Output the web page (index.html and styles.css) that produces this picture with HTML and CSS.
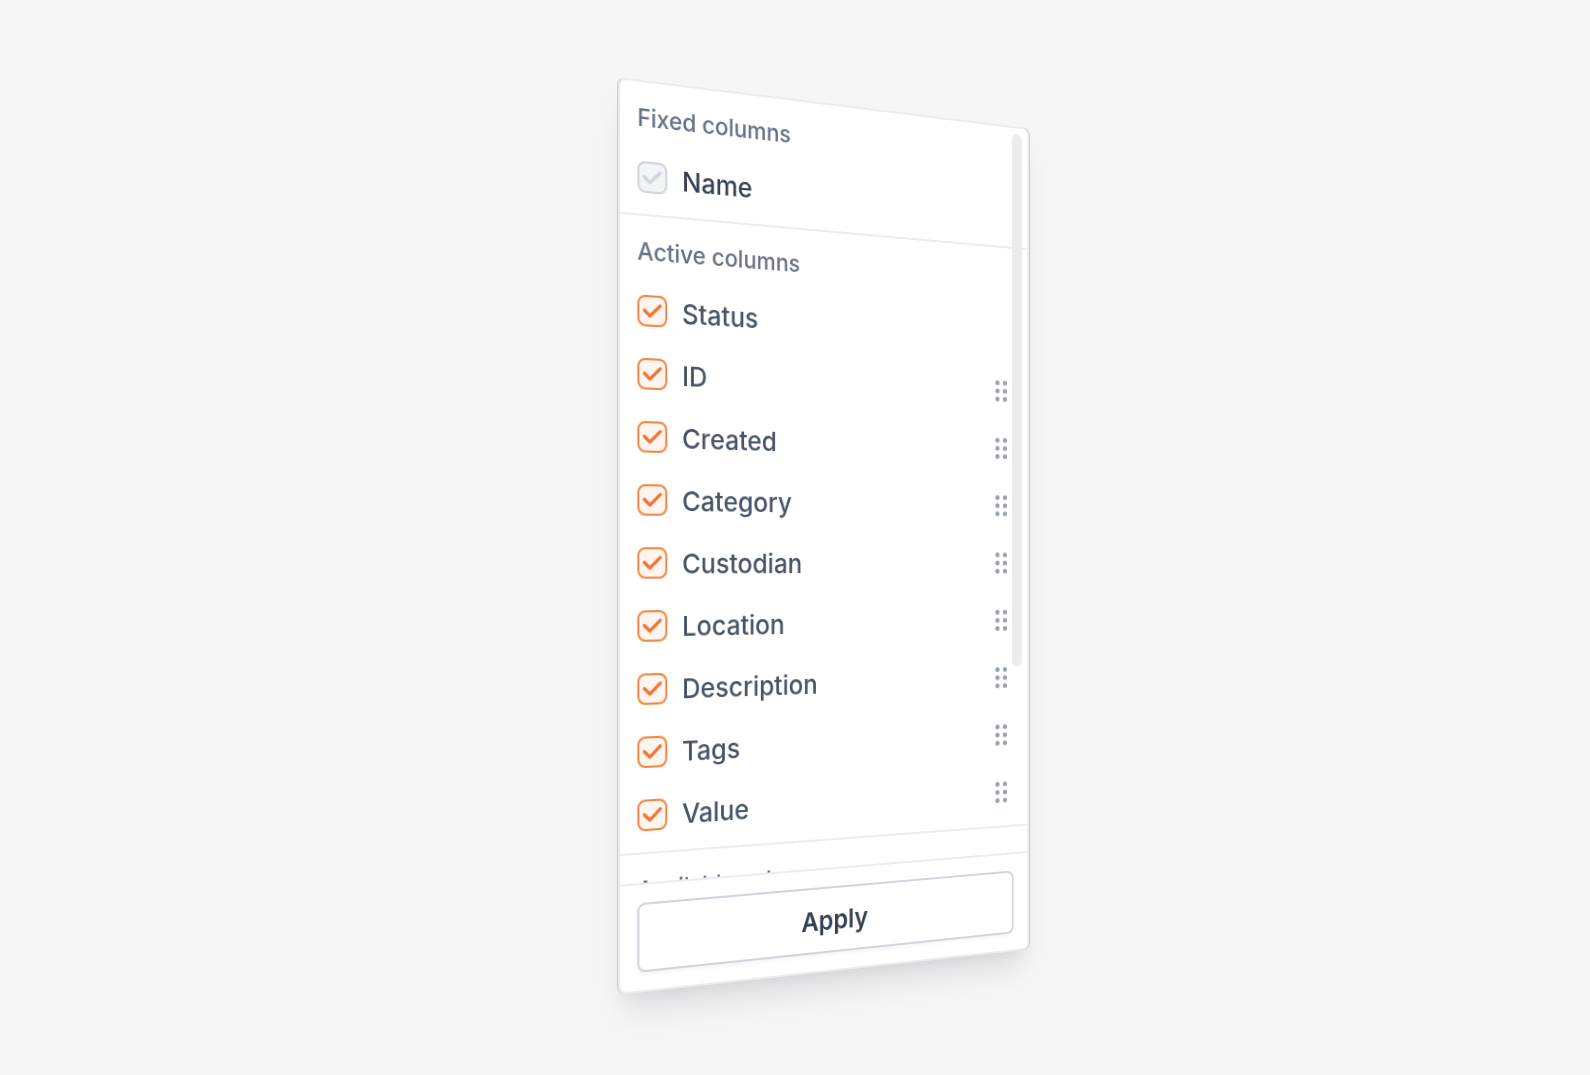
FILE: index.html
```
<!DOCTYPE html>
<html lang="en">
<head>
    <meta charset="UTF-8">
    <meta name="viewport" content="width=device-width, initial-scale=1">
    <title>Manage Columns</title>
    <link rel="stylesheet" href="styles.css">
</head>
<body>
<svg class="sprite" aria-hidden="true">
    <symbol id="icon-check" viewBox="0 0 30 30">
        <path d="M7 14.5L12.5 19.8L23 9.6" fill="none" stroke="currentColor" stroke-width="3.2" stroke-linecap="round" stroke-linejoin="round"/>
    </symbol>
    <symbol id="icon-grip" viewBox="0 0 30 30">
        <g fill="currentColor">
            <circle cx="10.5" cy="6.4" r="2.5"/>
            <circle cx="19.5" cy="6.4" r="2.5"/>
            <circle cx="10.5" cy="15" r="2.5"/>
            <circle cx="19.5" cy="15" r="2.5"/>
            <circle cx="10.5" cy="23.6" r="2.5"/>
            <circle cx="19.5" cy="23.6" r="2.5"/>
        </g>
    </symbol>
</svg>
<main class="stage">
    <form class="panel">
        <div class="list">
            <section class="group">
                <h2 class="group-title">Fixed columns</h2>
                <div class="row">
                    <label class="option option-fixed">
                        <span class="check">
                            <input type="checkbox" name="name" checked disabled>
                            <svg><use href="#icon-check"/></svg>
                        </span>
                        <span class="option-text">Name</span>
                    </label>
                </div>
            </section>
            <section class="group">
                <h2 class="group-title">Active columns</h2>
                <div class="row">
                    <label class="option">
                        <span class="check">
                            <input type="checkbox" name="status" checked>
                            <svg><use href="#icon-check"/></svg>
                        </span>
                        <span class="option-text">Status</span>
                    </label>
                </div>
                <div class="row">
                    <label class="option">
                        <span class="check">
                            <input type="checkbox" name="id" checked>
                            <svg><use href="#icon-check"/></svg>
                        </span>
                        <span class="option-text">ID</span>
                    </label>
                    <button type="button" class="grip" aria-label="Move ID"><svg><use href="#icon-grip"/></svg></button>
                </div>
                <div class="row">
                    <label class="option">
                        <span class="check">
                            <input type="checkbox" name="created" checked>
                            <svg><use href="#icon-check"/></svg>
                        </span>
                        <span class="option-text">Created</span>
                    </label>
                    <button type="button" class="grip" aria-label="Move Created"><svg><use href="#icon-grip"/></svg></button>
                </div>
                <div class="row">
                    <label class="option">
                        <span class="check">
                            <input type="checkbox" name="category" checked>
                            <svg><use href="#icon-check"/></svg>
                        </span>
                        <span class="option-text">Category</span>
                    </label>
                    <button type="button" class="grip" aria-label="Move Category"><svg><use href="#icon-grip"/></svg></button>
                </div>
                <div class="row">
                    <label class="option">
                        <span class="check">
                            <input type="checkbox" name="custodian" checked>
                            <svg><use href="#icon-check"/></svg>
                        </span>
                        <span class="option-text">Custodian</span>
                    </label>
                    <button type="button" class="grip" aria-label="Move Custodian"><svg><use href="#icon-grip"/></svg></button>
                </div>
                <div class="row">
                    <label class="option">
                        <span class="check">
                            <input type="checkbox" name="location" checked>
                            <svg><use href="#icon-check"/></svg>
                        </span>
                        <span class="option-text">Location</span>
                    </label>
                    <button type="button" class="grip" aria-label="Move Location"><svg><use href="#icon-grip"/></svg></button>
                </div>
                <div class="row">
                    <label class="option">
                        <span class="check">
                            <input type="checkbox" name="description" checked>
                            <svg><use href="#icon-check"/></svg>
                        </span>
                        <span class="option-text">Description</span>
                    </label>
                    <button type="button" class="grip" aria-label="Move Description"><svg><use href="#icon-grip"/></svg></button>
                </div>
                <div class="row">
                    <label class="option">
                        <span class="check">
                            <input type="checkbox" name="tags" checked>
                            <svg><use href="#icon-check"/></svg>
                        </span>
                        <span class="option-text">Tags</span>
                    </label>
                    <button type="button" class="grip" aria-label="Move Tags"><svg><use href="#icon-grip"/></svg></button>
                </div>
                <div class="row">
                    <label class="option">
                        <span class="check">
                            <input type="checkbox" name="value" checked>
                            <svg><use href="#icon-check"/></svg>
                        </span>
                        <span class="option-text">Value</span>
                    </label>
                    <button type="button" class="grip" aria-label="Move Value"><svg><use href="#icon-grip"/></svg></button>
                </div>
            </section>
            <section class="group">
                <h2 class="group-title">Available columns</h2>
            </section>
            <div class="scroll-thumb"></div>
        </div>
        <div class="footer">
            <button type="submit" class="apply">Apply</button>
        </div>
    </form>
</main>
</body>
</html>
```
FILE: styles.css
```
* {
    box-sizing: border-box;
}
body {
    margin: 0;
    min-height: 100vh;
    display: flex;
    align-items: center;
    justify-content: center;
    background-color: #f6f6f6;
    font-family: Inter, "Liberation Sans", sans-serif;
    font-weight: 500;
}
.sprite {
    display: none;
}
.stage {
    margin-left: 80px;
    perspective: 1720px;
    perspective-origin: 50% calc(50% + 26px);
}
.panel {
    width: 452px;
    background-color: #fff;
    border: 2px solid #eaecf0;
    border-radius: 8px;
    box-shadow: -1px 0 0 #c6cad0, 1px 0 0 #c6cad0, 0 22px 30px -8px rgba(16, 24, 40, 0.12), 0 8px 12px -4px rgba(16, 24, 40, 0.05);
    transform: rotateY(25deg);
}

/* columns list */
.list {
    position: relative;
    max-height: 761px;
    overflow: hidden;
}
.group {
    padding: 19px 17px 5px;
    border-bottom: 2px solid #eaecf0;
}
.group-title {
    margin: 0 0 11px;
    font-size: 23px;
    line-height: 30px;
    font-weight: 500;
    color: #667085;
}
.row {
    display: flex;
    align-items: center;
    justify-content: space-between;
    height: 60px;
}
.option {
    display: flex;
    align-items: center;
    gap: 15px;
    font-size: 26px;
    line-height: 38px;
    color: #475467;
}
.option-fixed {
    color: #344054;
}
.option-text {
    padding-top: 2px;
}
.scroll-thumb {
    position: absolute;
    top: 6px;
    right: 7px;
    width: 12px;
    height: 560px;
    border-radius: 6px;
    background-color: #eaecf0;
}

/* checkbox */
.check {
    display: grid;
    color: #f0753a;
}
.check input,
.check svg {
    grid-area: 1 / 1;
    width: 30px;
    height: 30px;
    margin: 0;
}
.check svg {
    pointer-events: none;
    visibility: hidden;
}
.check input {
    appearance: none;
    border: 2px solid #d0d5dd;
    border-radius: 8px;
    background-color: #fff;
}
.check input:checked {
    border-color: #f38744;
    background-color: #fef6ee;
}
.check input:checked + svg {
    visibility: visible;
}
.check input:disabled {
    border-color: #d0d5dd;
    background-color: #f2f4f7;
}
.check input:disabled + svg {
    color: #d0d5dd;
}

.grip {
    padding: 0;
    border: none;
    background: none;
    color: #98a2b3;
    cursor: grab;
}
.grip svg {
    display: block;
    width: 30px;
    height: 30px;
}

/* footer */
.footer {
    padding: 17px;
    border-top: 2px solid #eaecf0;
}
.apply {
    display: block;
    width: 100%;
    height: 66px;
    border: 2px solid #d0d5dd;
    border-radius: 8px;
    background-color: #fff;
    box-shadow: 0 2px 4px rgba(16, 24, 40, 0.05);
    font-family: inherit;
    font-size: 26px;
    font-weight: 600;
    color: #344054;
    cursor: pointer;
}
```
